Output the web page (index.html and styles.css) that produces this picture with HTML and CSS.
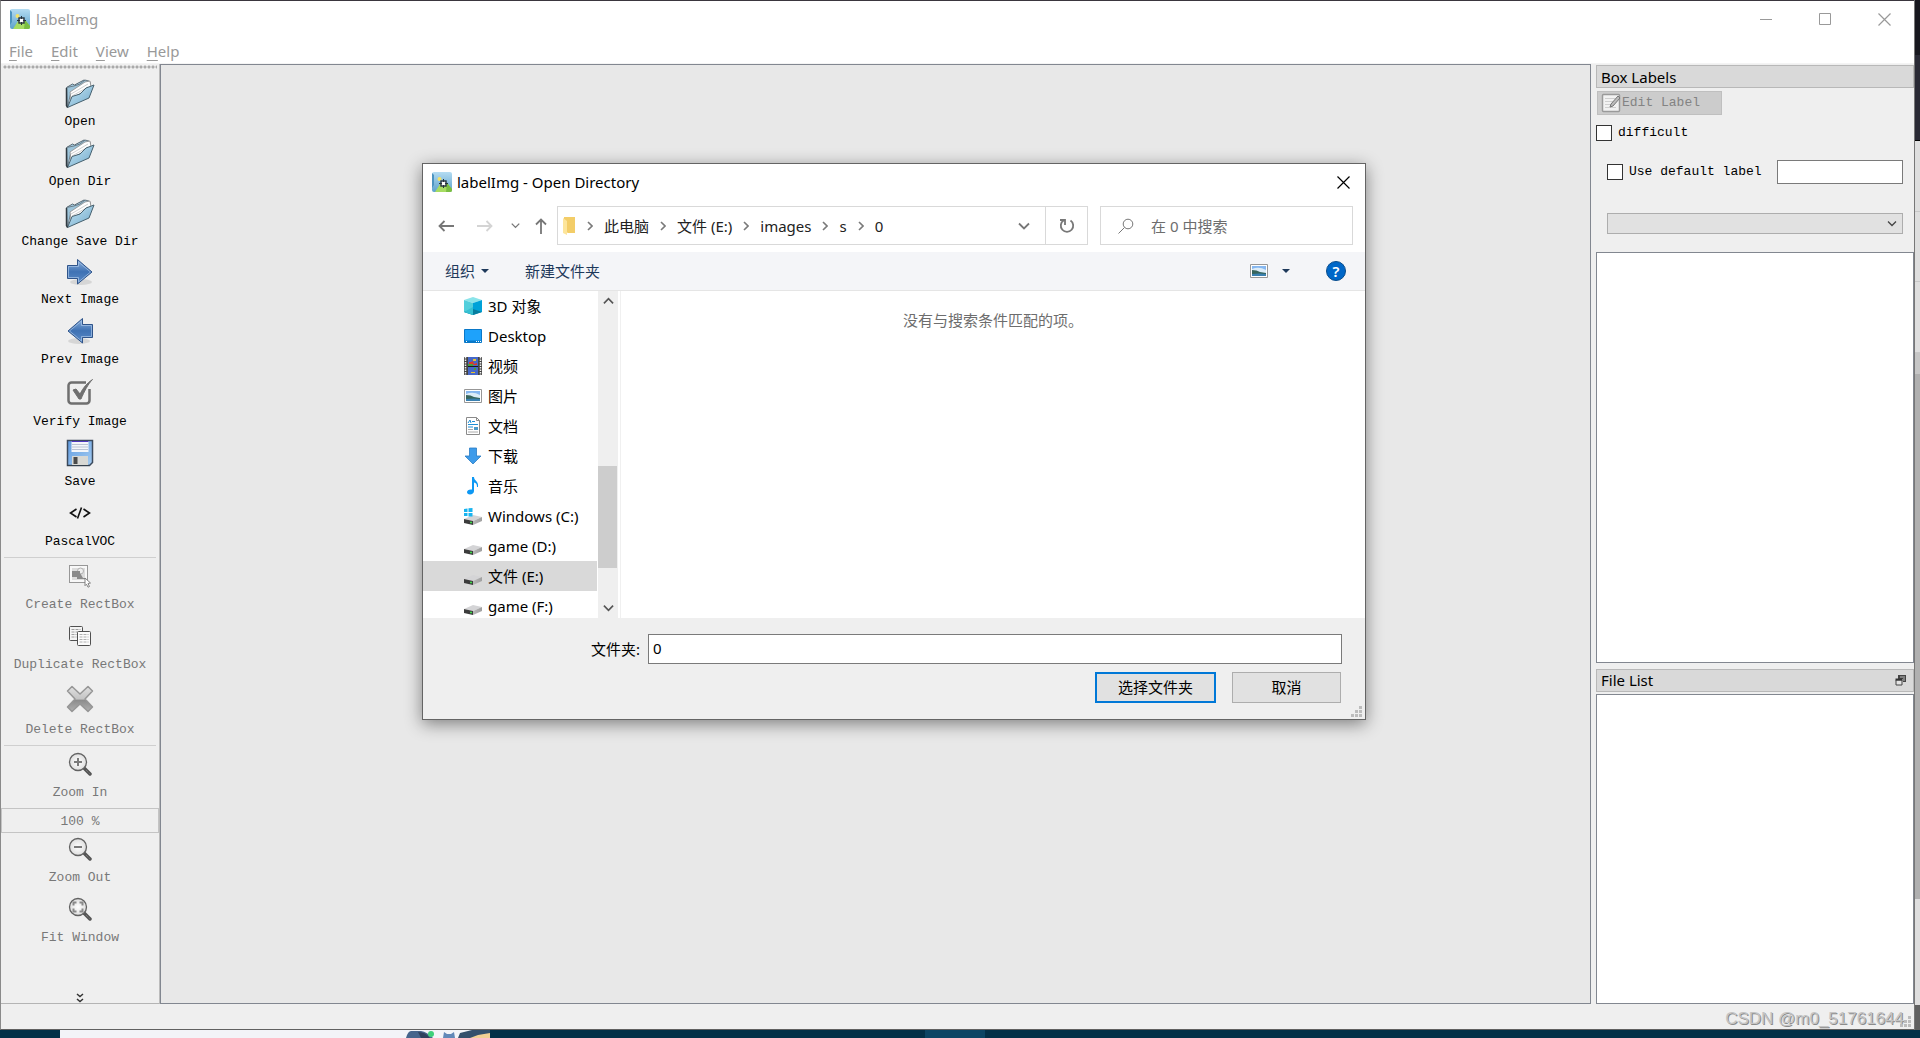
FILE: index.html
```html
<!DOCTYPE html>
<html lang="zh-CN">
<head>
<meta charset="utf-8">
<title>labelImg</title>
<link rel="stylesheet" href="styles.css">
</head>
<body>
<svg class="defs" aria-hidden="true">
  <defs>
    <linearGradient id="gSky" x1="0" y1="0" x2="0" y2="1"><stop offset="0" stop-color="#b4dcf2"/><stop offset="1" stop-color="#5ca2cc"/></linearGradient>
    <linearGradient id="gFolder" x1="0" y1="0" x2="1" y2="1"><stop offset="0" stop-color="#c8e6f4"/><stop offset="1" stop-color="#6fa9cb"/></linearGradient>
    <linearGradient id="gArrow" x1="0" y1="0" x2="0" y2="1"><stop offset="0" stop-color="#8fb2dc"/><stop offset="0.5" stop-color="#3f72b4"/><stop offset="1" stop-color="#5c8cc8"/></linearGradient>
    <linearGradient id="gFloppy" x1="0" y1="0" x2="1" y2="1"><stop offset="0" stop-color="#5f9be0"/><stop offset="1" stop-color="#a6cdf2"/></linearGradient>
    <linearGradient id="gCross" x1="0" y1="0" x2="0" y2="1"><stop offset="0" stop-color="#e0e0e0"/><stop offset="0.5" stop-color="#c4c4c4"/><stop offset="0.55" stop-color="#8c8c8c"/><stop offset="1" stop-color="#b0b0b0"/></linearGradient>
    <linearGradient id="gDisk" x1="0" y1="0" x2="1" y2="0"><stop offset="0" stop-color="#b8b8b8"/><stop offset="1" stop-color="#a0a0a0"/></linearGradient>
    <radialGradient id="gLens"><stop offset="0" stop-color="#ffffff"/><stop offset="1" stop-color="#dedede"/></radialGradient>

    <symbol id="app" viewBox="0 0 20 20">
      <rect width="20" height="20" rx="2" fill="url(#gSky)"/>
      <path d="M0 1l2 2v10l-2 3z" fill="#4d94c0"/>
      <path d="M3 20l7-11 3 4 2-2 5 6v1a2 2 0 0 1-2 2z" fill="#a6dc62"/>
      <path d="M14 20l1-9 5 6v1a2 2 0 0 1-2 2z" fill="#79bd42"/>
      <circle cx="7.500" cy="7" r="2" fill="#f3e268"/>
      <rect x="9" y="9" width="5" height="5" fill="#fff" stroke="#26323c" stroke-width="1.400"/>
      <path d="M11.500 7v3M11.500 13v3M7 11.500h3M13 11.500h3" stroke="#26323c"/>
    </symbol>
    <symbol id="folder" viewBox="0 0 30 30">
      <path d="M1.500 9.500l6-3.500 2 1L19 2l2 1 4 1v5" fill="#a8cfe4" stroke="#5a6a74"/>
      <path d="M1.500 9.500l1 19.500 3-13L11 14 25 6l-1-3-4-1-5 4-6 2z" fill="#9cc4da" stroke="#5a6a74" stroke-width="0.800"/>
      <path d="M5 14L20 4l5-1 1 6L6 21z" fill="#fff" stroke="#8a8a8a" stroke-width="0.800"/>
      <path d="M6 16l17-10M7 18l16-9" stroke="#d0d0d0"/>
      <path d="M2.500 29.500L7 18.500l8-2.500 6-6 8-3-5 13z" fill="url(#gFolder)" stroke="#46606e"/>
      <path d="M1.500 10v17.500l1 2" stroke="#303a40" stroke-width="1.500" fill="none"/>
    </symbol>
    <symbol id="next" viewBox="0 0 28 28">
      <ellipse cx="15" cy="24" rx="11" ry="3" fill="#000" opacity="0.100"/>
      <path d="M1.500 7.500h10V1.500L26 14 11.500 26v-5.500h-10z" fill="url(#gArrow)" stroke="#2f548a"/>
      <path d="M2.500 8.500h10V4L24.500 14 12.500 24v-4.500h-10z" fill="none" stroke="#a9c5e8" stroke-width="0.700"/>
    </symbol>
    <symbol id="verify" viewBox="0 0 28 28">
      <path d="M20 4.500H5.500a3 3 0 0 0-3 3v15a3 3 0 0 0 3 3h15a3 3 0 0 0 3-3V11" fill="none" stroke="#6f6f6f" stroke-width="2.500"/>
      <path d="M7 12l3-1 4 5c3-6 7-11 12.500-14.500C22 6 18 14 15 21h-2z" fill="#6f6f6f" stroke="#6f6f6f" stroke-linejoin="round"/>
    </symbol>
    <symbol id="save" viewBox="0 0 28 28">
      <path d="M1.500 1.500h25v22l-3 3h-22z" fill="url(#gFloppy)" stroke="#3c4a5c" stroke-width="1.500"/>
      <path d="M5.500 2h17v11h-17z" fill="#f4f6fa"/><path d="M5.500 2.500h17" stroke="#5038c0"/><path d="M6 5.500h16M6 8h16M6 10.500h16" stroke="#b9c4d4"/>
      <path d="M6 17h16v9H6z" fill="#d8d8d4"/><path d="M7.500 18h4v7h-4z" fill="#4a4a4a"/><path d="M1 26.500h22" stroke="#34404c"/>
    </symbol>
    <symbol id="code" viewBox="0 0 24 12">
      <path d="M8.500 2L2.500 6l6 4M15.500 2l6 4-6 4M13.500 0.500l-4 11" fill="none" stroke="#111" stroke-width="1.600"/>
    </symbol>
    <symbol id="create" viewBox="0 0 24 24">
      <rect x="1.500" y="1.500" width="18" height="17" fill="#f8f8f8" stroke="#3a3a3a" stroke-dasharray="1 1"/>
      <rect x="4" y="4" width="13" height="12" fill="#dcdcdc"/><circle cx="12.500" cy="7" r="3" fill="#eee" stroke="#b0b0b0"/>
      <path d="M4 7h8v2l3 5h2v1H9v-2H4z" fill="#8a8a8a"/>
      <path d="M17 14l5.500 5-2.500.500 1.500 3-1.500.700-1.500-3-1.500 1.500z" fill="#fff" stroke="#777" stroke-width="0.900"/>
    </symbol>
    <symbol id="duplicate" viewBox="0 0 24 24">
      <rect x="1.500" y="2.500" width="13" height="14" rx="1" fill="#f4f4f4" stroke="#505050"/>
      <path d="M3.500 5.500h9M3.500 8h6M3.500 10.500h5M3.500 13h5" stroke="#a0a0a0" stroke-dasharray="3 1"/>
      <rect x="9.500" y="7.500" width="13" height="14" rx="1" fill="#fcfcfc" stroke="#505050"/>
      <path d="M11.500 10.500h9M11.500 13h9M11.500 15.500h9M11.500 18h9" stroke="#b0b0b0" stroke-dasharray="3 1"/>
    </symbol>
    <symbol id="delete" viewBox="0 0 28 28">
      <path d="M6 1.500l8 7.500 8-7.500 4.500 4.500-7.500 8 7.500 8-4.500 4.500-8-7.500-8 7.500L1.500 22 9 14 1.500 6z" fill="url(#gCross)" stroke="#969696" stroke-width="1.500" stroke-linejoin="round"/>
    </symbol>
    <symbol id="lens" viewBox="0 0 24 24">
      <path d="M16 16l6 6" stroke="#555" stroke-width="3.500" stroke-linecap="round"/><path d="M18 18l3.500 3.500" stroke="#8a8a8a" stroke-dasharray="1 1"/>
      <circle cx="10" cy="10" r="8.500" fill="url(#gLens)" stroke="#626262" stroke-width="1.300"/>
    </symbol>
    <symbol id="edit" viewBox="0 0 20 20">
      <rect x="1.500" y="1.500" width="17" height="17" rx="1" fill="#f2f2f2" stroke="#9a9a9a" stroke-width="1.500"/>
      <path d="M4 5.500h10M4 8.500h8M4 11.500h6M4 14.500h11" stroke="#cfcfcf"/>
      <path d="M9 14l1-3 7-8 2 2-7 8z" fill="#bbb" stroke="#777"/>
    </symbol>
    <symbol id="cube" viewBox="0 0 18 18"><path d="M0 3l9-3 9 3-9 3z" fill="#8be4ea"/><path d="M0 3l9 3v12l-9-3z" fill="#52cfdc"/><path d="M18 3L9 6v12l9-3z" fill="#00a2d8"/><path d="M9 12l9 3-9 3-9-3z" fill="#087e9e"/><path d="M0 15l9-5v8z" fill="#36c0d2"/></symbol>
    <symbol id="desktop" viewBox="0 0 18 18"><path d="M.5 2.500h17v13H.5z" fill="#1ea2fb" stroke="#0a78c8"/><path d="M1 13.500h16v1.500H1z" fill="#0878c8"/><path d="M2 14.500h1M12 14.500h1M14 14.500h1M16 14.500h1" stroke="#fff"/></symbol>
    <symbol id="video" viewBox="0 0 18 18"><path d="M0 0h18v18H0z" fill="#444"/><path d="M1.500 0v18M16.500 0v18" stroke="#eee" stroke-width="1.500" stroke-dasharray="1.500 1"/><path d="M4 0h10v9H4zM4 10h10v8H4z" fill="#4668c8"/><path d="M5 5h2l2-1 1 3 3-1v2H5z" fill="#d83a2c"/><path d="M9 2h3v2H9zM7 15h4v1H7z" fill="#e8c22c"/><path d="M4 7h5v2H4zM10 11h2v2h-2z" fill="#46a03c"/><path d="M4 9.500h10" stroke="#1b1b1b"/></symbol>
    <symbol id="picture" viewBox="0 0 18 18"><path d="M.5 2.500h17v13H.5z" fill="#fff" stroke="#979797"/><path d="M2 4h14v10H2z" fill="#86b7f0"/><path d="M2 7q7-3 14 1v3H2z" fill="#dcecf8"/><path d="M2 8q5 0 8 2l6 1v3H2z" fill="#37655c"/><path d="M2 12q8-1 14 0v2H2z" fill="#3a80b0"/></symbol>
    <symbol id="document" viewBox="0 0 18 18"><path d="M2.500.5h10l3 3v14h-13z" fill="#fff" stroke="#8a8a8a"/><path d="M12.500.5v3h3" fill="none" stroke="#8a8a8a"/><path d="M4 6l2-3 1 3M8 4.500h3M4 7.500h10M4 10h5" stroke="#1f8fd6" fill="none"/><path d="M10 10h4v3h-4z" fill="#4c9ac8"/><path d="M4 12.500h5M4 15h10" stroke="#aaa"/></symbol>
    <symbol id="download" viewBox="0 0 18 18"><path d="M5.500 1h7v8h4.500l-8 8-8-8h4.500z" fill="#3d9bea" stroke="#2a7cc4" stroke-width="0.800"/></symbol>
    <symbol id="music" viewBox="0 0 18 18"><path d="M8 0h2c0 4 5 4 4 10h-1c0-3-1-4-3-4.500V14c0 2-2 3.500-4 3.500S3 16.500 3 15s2-3 5-2.500z" fill="#0d98f4"/></symbol>
    <symbol id="drive" viewBox="0 0 18 18"><path d="M0 12l9-4 9 2-9 4z" fill="#d4d4d6"/><path d="M0 12l9 2v4l-9-2z" fill="#3c3c3c"/><path d="M9 14l9-4v4l-9 4z" fill="url(#gDisk)"/><path d="M6 15.500h2" stroke="#3fdc4a" stroke-width="1.500"/></symbol>
    <symbol id="windrive" viewBox="0 0 18 18"><use href="#drive"/><path d="M0 2l3.500-.5V5H0zM4.500 1.300L8.500 1v4h-4zM0 6h3.500v3H0zM4.500 6h4v3.500h-4z" fill="#18b4f0"/></symbol>
    <symbol id="sep" viewBox="0 0 6 10"><path d="M1 1l4 4-4 4" fill="none" stroke="#7a7a7a" stroke-width="1.600"/></symbol>
    <symbol id="down" viewBox="0 0 12 8"><path d="M1 1.500l5 5 5-5" fill="none" stroke="currentColor" stroke-width="1.800"/></symbol>
    <symbol id="back" viewBox="0 0 16 12"><path d="M6.500 1l-5 5 5 5M1.500 6H16" fill="none" stroke="currentColor" stroke-width="1.800"/></symbol>
    <symbol id="close" viewBox="0 0 13 13"><path d="M.5.5l12 12M12.500.5l-12 12" stroke="currentColor" stroke-width="1.200"/></symbol>
    <symbol id="grip" viewBox="0 0 11 11"><path d="M8 0h3v3H8zM4 4h3v3H4zM8 4h3v3H8zM0 8h3v3H0zM4 8h3v3H4zM8 8h3v3H8z" fill="#bcbcbc"/></symbol>
  </defs>
</svg>

<div class="desktop">
  <div class="screen">
    <main class="window">
      <header class="titlebar">
        <svg class="i20"><use href="#app"/></svg>
        <span class="titlebar-text">labelImg</span>
        <div class="win-buttons">
          <button aria-label="Minimize"><svg width="13" height="13"><path d="M0 6.500h12" stroke="#999"/></svg></button>
          <button aria-label="Maximize"><svg width="13" height="13"><path d="M.5.5h11v11H.5z" fill="none" stroke="#999"/></svg></button>
          <button aria-label="Close"><svg width="13" height="13"><use href="#close"/></svg></button>
        </div>
      </header>
      <nav class="menubar">
        <a href="#file"><u>F</u>ile</a><a href="#edit"><u>E</u>dit</a><a href="#view"><u>V</u>iew</a><a href="#help"><u>H</u>elp</a>
      </nav>

      <div class="workspace">
        <aside class="toolbar">
          <div class="handle"></div>
          <div class="group group-first">
            <button class="tool"><svg class="i30"><use href="#folder"/></svg><span>Open</span></button>
            <button class="tool"><svg class="i30"><use href="#folder"/></svg><span>Open Dir</span></button>
            <button class="tool"><svg class="i30"><use href="#folder"/></svg><span>Change Save Dir</span></button>
            <button class="tool tool-short"><svg class="i28"><use href="#next"/></svg><span>Next Image</span></button>
            <button class="tool"><svg class="i28 flip"><use href="#next"/></svg><span>Prev Image</span></button>
            <button class="tool tool-tall"><svg class="i28"><use href="#verify"/></svg><span>Verify Image</span></button>
            <button class="tool"><svg class="i28"><use href="#save"/></svg><span>Save</span></button>
            <button class="tool"><svg class="icode"><use href="#code"/></svg><span>PascalVOC</span></button>
          </div>
          <div class="group group-ruled">
            <button class="tool" disabled><svg class="i24"><use href="#create"/></svg><span>Create RectBox</span></button>
            <button class="tool" disabled><svg class="i24"><use href="#duplicate"/></svg><span>Duplicate RectBox</span></button>
            <button class="tool tool-big" disabled><svg class="i28"><use href="#delete"/></svg><span>Delete RectBox</span></button>
          </div>
          <div class="group group-ruled">
            <button class="tool" disabled><svg class="i24"><use href="#lens"/><path d="M6 10h8M10 6v8" stroke="#7a7a7a" stroke-width="2"/></svg><span>Zoom In</span></button>
          </div>
          <input class="zoom" value="100 %" aria-label="Zoom level" disabled>
          <div class="group">
            <button class="tool" disabled><svg class="i24"><use href="#lens"/><path d="M6 10h8" stroke="#7a7a7a" stroke-width="2"/></svg><span>Zoom Out</span></button>
            <button class="tool" disabled><svg class="i24"><use href="#lens"/><path d="M5.500 8.500v-3h3M11.500 5.500h3v3M14.500 11.500v3h-3M8.500 14.500h-3v-3" stroke="#8a8a8a" stroke-width="2" fill="none"/></svg><span>Fit Window</span></button>
          </div>
          <button class="more" aria-label="More tools"><svg width="8" height="10"><path d="M1 1l3 2.500L7 1M1 6l3 2.500L7 6" fill="none" stroke="#333" stroke-width="1.500"/></svg></button>
        </aside>

        <section class="canvas"></section>

        <aside class="docks">
          <h2 class="dock-title">Box Labels</h2>
          <button class="edit-label" disabled><svg class="i20"><use href="#edit"/></svg>Edit Label</button>
          <label class="check"><input type="checkbox">difficult</label>
          <div class="default-row">
            <label class="check"><input type="checkbox">Use default label</label>
            <input class="default-input" type="text" aria-label="Default label">
          </div>
          <div class="combo">
            <select aria-label="Label filter"></select>
            <svg width="12" height="8"><path d="M2 1.500l4 4 4-4" fill="none" stroke="#444" stroke-width="1.300"/></svg>
          </div>
          <div class="list list-labels"></div>
          <h2 class="dock-title dock-files">File List
            <button aria-label="Float"><svg width="11" height="11"><path d="M3 0h8v7H8V4H3z" fill="#444"/><path d="M5 2h5M9 3v3" stroke="#bbb"/><path d="M1 5h6v5H1z" fill="#e4e4e4" stroke="#444"/><path d="M.5 4.500h7" stroke="#333" stroke-width="2"/></svg></button>
          </h2>
          <div class="list list-files"></div>
        </aside>
      </div>
      <footer class="statusbar"><span class="watermark">CSDN @m0_51761644</span><svg width="11" height="11"><use href="#grip"/></svg></footer>
    </main>

    <div class="behind">
      <i class="b-dark"></i><i class="b-slate"></i><i class="b-light"></i><i class="b-light"></i><i class="b-light"></i><i class="b-bar"></i><i class="b-grey"></i><i class="b-page"></i><i class="b-end"></i>
    </div>
  </div>
  <div class="taskbar">
    <div class="task-search">
      <svg width="86" height="8" viewBox="0 0 86 8"><path d="M2 8q2-7 5-7h10q6 1 12 7z" fill="#46658c"/><path d="M14 2q8 0 12 6h-9z" fill="#2f405c"/><circle cx="27" cy="4" r="3" fill="#3ed07a"/><path d="M39 8l1-6 3 2h4l3-2 1 6z" fill="#6288b8"/><path d="M54 8l2-5 12-3h18v8z" fill="#34506c"/><path d="M66 8l8-3 12-2v5z" fill="#f2cf94"/></svg>
    </div>
    <div class="task-active"></div>
  </div>

  <div class="dialog" role="dialog" aria-label="Open Directory">
    <header class="dlg-title"><svg class="i20"><use href="#app"/></svg><span>labelImg - Open Directory</span>
      <button aria-label="Close"><svg width="13" height="13"><use href="#close"/></svg></button></header>
    <div class="dlg-nav">
      <div class="arrows">
        <button aria-label="Back"><svg width="16" height="12"><use href="#back"/></svg></button>
        <button class="dim" aria-label="Forward"><svg class="flip" width="16" height="12"><use href="#back"/></svg></button>
        <button aria-label="Recent"><svg width="9" height="7"><use href="#down"/></svg></button>
        <button aria-label="Up"><svg width="12" height="16"><path d="M1 6.500l5-5 5 5M6 1.500V16" fill="none" stroke="currentColor" stroke-width="1.800"/></svg></button>
      </div>
      <div class="address">
        <svg class="addr-icon" width="13" height="18"><path d="M1 0h11v16H5L1 14z" fill="#f3cd68"/><path d="M0 1l4 3v14l-4-2z" fill="#fde59b"/></svg>
        <svg class="sep"><use href="#sep"/></svg><a href="#pc">此电脑</a>
        <svg class="sep"><use href="#sep"/></svg><a href="#e">文件 (E:)</a>
        <svg class="sep"><use href="#sep"/></svg><a href="#images">images</a>
        <svg class="sep"><use href="#sep"/></svg><a href="#s">s</a>
        <svg class="sep"><use href="#sep"/></svg><a href="#0">0</a>
        <button class="addr-drop" aria-label="History"><svg width="12" height="8"><use href="#down"/></svg></button>
        <button class="refresh" aria-label="Refresh"><svg width="16" height="16"><path d="M11.500 2.500a6.200 6.200 0 1 1-7 0M1 2h5v5" fill="none" stroke="currentColor" stroke-width="1.800"/></svg></button>
      </div>
      <label class="search"><svg width="16" height="16"><circle cx="10" cy="6" r="4.800" fill="none" stroke="#777"/><path d="M6.500 9.500L.5 15.500" stroke="#777"/></svg><input type="text" placeholder="在 0 中搜索" aria-label="搜索"></label>
    </div>
    <div class="dlg-bar">
      <button>组织<i class="caret"></i></button>
      <button>新建文件夹</button>
      <button class="view-mode" aria-label="视图"><svg class="i18"><use href="#picture"/></svg><i class="caret"></i></button>
      <button class="help" aria-label="帮助">?</button>
    </div>
    <div class="dlg-body">
      <ul class="tree">
        <li><svg class="i18"><use href="#cube"/></svg>3D 对象</li>
        <li><svg class="i18"><use href="#desktop"/></svg>Desktop</li>
        <li><svg class="i18"><use href="#video"/></svg>视频</li>
        <li><svg class="i18"><use href="#picture"/></svg>图片</li>
        <li><svg class="i18"><use href="#document"/></svg>文档</li>
        <li><svg class="i18"><use href="#download"/></svg>下载</li>
        <li><svg class="i18"><use href="#music"/></svg>音乐</li>
        <li><svg class="i18"><use href="#windrive"/></svg>Windows (C:)</li>
        <li><svg class="i18"><use href="#drive"/></svg>game (D:)</li>
        <li class="selected"><svg class="i18"><use href="#drive"/></svg>文件 (E:)</li>
        <li><svg class="i18"><use href="#drive"/></svg>game (F:)</li>
      </ul>
      <div class="scroll"><svg class="turn" width="11" height="8"><use href="#down"/></svg><div class="track"><div class="thumb"></div></div><svg width="11" height="8"><use href="#down"/></svg></div>
      <div class="files">没有与搜索条件匹配的项。</div>
    </div>
    <form class="dlg-foot">
      <label for="folder-name">文件夹:</label><input id="folder-name" type="text" value="0">
      <div class="actions"><button class="primary" type="button">选择文件夹</button><button type="button">取消</button></div>
      <svg class="grip" width="11" height="11"><use href="#grip"/></svg>
    </form>
  </div>
</div>
</body>
</html>
```
FILE: styles.css
```css
* { box-sizing: border-box; }
body { margin: 0; font: 15px/20px "Noto Sans", "Noto Sans CJK SC", sans-serif; color: #000; }
button, input, select { font: inherit; color: inherit; margin: 0; border-radius: 0; }
button { padding: 0; border: 0; background: none; }
a { color: inherit; text-decoration: none; }
svg { display: block; flex: none; }
.defs { position: absolute; width: 0; height: 0; }
.i18 { width: 18px; height: 18px; }
.i20 { width: 20px; height: 20px; }
.i24 { width: 24px; height: 24px; }
.i28 { width: 28px; height: 28px; }
.i30 { width: 30px; height: 30px; }
.icode { width: 24px; height: 12px; }
.flip { transform: scaleX(-1); }
.turn { transform: scaleY(-1); }

.desktop { position: relative; height: 100vh; display: flex; flex-direction: column; overflow: hidden; background: #033047; }
.screen { flex: 1; display: flex; min-height: 0; }
.window { flex: 1; display: flex; flex-direction: column; min-width: 0; background: #efefef; border: 1px solid #3a363e; border-right: 0; border-left-color: #8a8a8a; border-bottom-color: #606060; }

/* Title and menus */
.titlebar { display: flex; align-items: center; height: 36px; padding-left: 9px; gap: 6px; background: #fff; color: #999; }
.win-buttons { display: flex; margin-left: auto; }
.win-buttons button { width: 59px; display: flex; justify-content: center; }
.menubar { display: flex; gap: 18px; height: 27px; padding: 4px 8px; background: #fff; color: #999; border-bottom: 1px solid #f4f4f4; }
.menubar u { text-underline-offset: 3px; }
.workspace { flex: 1; display: flex; min-height: 0; }

/* Toolbar */
.toolbar { width: 159px; flex: none; display: flex; flex-direction: column; border-right: 1px solid #bcbcbc; border-bottom: 1px solid #b4b4b4; font: 13px/16px "Liberation Mono", monospace; }
.handle { height: 4px; margin: 1px 2px 8px; background: radial-gradient(circle at 2px 2px, #aaa 1px, #efefef 2px) 0 0 / 4px 4px; }
.group { display: flex; flex-direction: column; gap: 7px; }
.group-first { padding-bottom: 7px; }
.group-ruled { padding: 2px 0 7px; border-top: 1px solid #cfcfcf; margin: 0 3px; }
.tool { display: grid; grid-template-rows: 32px 16px; row-gap: 5px; justify-items: center; align-items: center; white-space: nowrap; }
.tool-short { grid-template-rows: 30px 16px; }
.tool-tall { grid-template-rows: 34px 16px; }
.tool-big { grid-template-rows: 37px 16px; }
.tool:disabled { color: #787878; }
.zoom { height: 25px; width: 100%; border: 1px solid #c4c4c4; background: #efefef; color: #787878; text-align: center; padding: 2px 0 0; }
.more { margin-top: auto; height: 10px; display: flex; justify-content: center; }

.canvas { flex: 1; min-width: 0; background: #e8e8e8; border: 1px solid #828790; }

/* Docks */
.docks { width: 323px; flex: none; display: flex; flex-direction: column; padding: 1px 0 0 5px; }
.dock-title { flex: none; display: flex; align-items: center; height: 23px; margin: 0; padding: 0 7px 0 4px; font-size: 15px; font-weight: 400; background: #d9d9d9; border: 1px solid #b8b8b8; }
.dock-title button { margin-left: auto; }
.edit-label { display: flex; align-items: center; gap: 1px; align-self: flex-start; width: 125px; height: 24px; margin: 3px 0 0 1px; padding-left: 3px; border: 1px solid #bfbfbf; background: #ccc; color: #838383; font: 13px/16px "Liberation Mono", monospace; }
.check { display: flex; align-items: center; gap: 6px; height: 16px; font: 13px/16px "Liberation Mono", monospace; }
.check input { appearance: none; width: 16px; height: 16px; border: 1px solid #333; background: #fff; }
.docks > .check { margin-top: 10px; }
.default-row { display: flex; align-items: center; justify-content: space-between; margin: 19px 11px 0; }
.default-input { width: 126px; height: 24px; border: 1px solid #7a7a7a; background: #fff; }
.combo { display: grid; align-items: center; margin: 29px 11px 0; }
.combo select { grid-area: 1 / 1; appearance: none; height: 21px; border: 1px solid #adadad; background: #e1e1e1; }
.combo svg { grid-area: 1 / 1; justify-self: end; margin-right: 5px; }
.list { background: #fff; border: 1px solid #828790; min-height: 0; }
.list-labels { flex: 411; margin-top: 18px; }
.dock-files { margin: 6px 0 2px; }
.list-files { flex: 310; }
.statusbar { height: 25px; flex: none; display: flex; justify-content: flex-end; align-items: flex-end; padding: 0 3px 2px 0; }
.watermark { font: 17px/17px "Liberation Sans", sans-serif; color: #c4c4c4; text-shadow: 1px 1px 0 #8c8c8c; margin-right: -4px; white-space: nowrap; }

/* Windows showing past the right edge */
.behind { width: 6px; flex: none; display: flex; flex-direction: column; border-left: 1px solid #777; }
.behind i { background: #dedede; }
.b-dark { flex: 55; }
.behind .b-dark { background: #18181f; }
.behind .b-slate { flex: 86; background: #2a2a35; border-bottom: 1px solid #000; }
.behind .b-light { flex: 70; border-bottom: 1px solid #c8c8c8; }
.behind .b-bar { flex: 21; background: #c6c6c6; }
.behind .b-grey { flex: 528; background: #b0b0b0; }
.b-page { flex: 107; }
.behind .b-end { flex: 25; background: #606060; }

.taskbar { display: flex; height: 8px; flex: none; padding-left: 60px; }
.task-search { width: 430px; background: #f3f4f8; display: flex; justify-content: flex-end; }
.task-active { width: 60px; margin-left: 435px; background: #0c4564; }

/* Directory dialog */
.dialog { position: absolute; left: 422px; top: 163px; width: 944px; display: flex; flex-direction: column; background: #fff; border: 1px solid #646464; box-shadow: 0 4px 16px rgba(0, 0, 0, 0.45); }
.dlg-title { display: flex; align-items: center; gap: 5px; height: 36px; padding: 0 15px 0 9px; }
.dlg-title button { margin-left: auto; }
.dlg-nav { display: flex; height: 45px; padding: 6px 12px 0 15px; color: #777; }
.arrows { display: flex; align-items: center; width: 119px; height: 39px; }
.arrows button { margin-right: 23px; }
.arrows button:nth-child(n+2) { margin-right: 18px; }
.arrows button:nth-child(n+3) { margin-right: 15px; }
.arrows .dim { color: #d4d4d4; }
.address { flex: 1; display: flex; align-items: center; gap: 11px; height: 39px; padding-left: 5px; border: 1px solid #d9d9d9; color: #222; white-space: nowrap; }
.sep { width: 6px; height: 10px; }
.address button { color: #777; display: flex; align-items: center; justify-content: center; height: 100%; }
.addr-drop { width: 20px; margin-left: auto; }
.refresh { width: 42px; }
.address .refresh { border-left: 1px solid #d9d9d9; }
.search { display: flex; align-items: center; gap: 17px; width: 253px; height: 39px; margin-left: 12px; padding-left: 17px; border: 1px solid #d9d9d9; }
.search input { width: 180px; border: 0; padding: 0; background: none; }
.search input::placeholder { color: #6d6d6d; }
.dlg-bar { display: flex; align-items: center; gap: 36px; height: 39px; margin-top: 7px; padding: 0 19px 0 22px; background: #f4f5f8; border-bottom: 1px solid #e5e5e5; color: #1e395b; }
.dlg-bar button { display: flex; align-items: center; }
.caret { border: 4px solid transparent; border-top-color: #1e395b; border-bottom: 0; margin-left: 6px; }
.view-mode { margin-left: auto; }
.view-mode .caret { margin-left: 14px; }
.dlg-bar .help { width: 20px; height: 20px; justify-content: center; border-radius: 50%; background: #0067c8; border: 1px solid #084c8c; color: #fff; font-weight: 600; }
.dlg-body { display: flex; height: 327px; }
.tree { width: 174px; margin: 0; padding: 0; list-style: none; overflow: hidden; white-space: nowrap; }
.tree li { display: flex; align-items: center; gap: 6px; height: 30px; padding-left: 41px; }
.tree .selected { background: #d9d9d9; }
.scroll { width: 20px; padding: 6px 0; margin-left: 1px; display: flex; flex-direction: column; align-items: center; background: #efefef; color: #555; }
.track { flex: 1; width: 100%; display: grid; grid-template-rows: 161fr 102fr 36fr; }
.thumb { grid-row: 2; background: #cdcdcd; margin-right: 1px; }
.files { flex: 1; border-left: 1px solid #f0f0f0; margin-left: 2px; padding-top: 19px; text-align: center; color: #6d6d6d; }
.dlg-foot { display: grid; grid-template-columns: 217px 1fr; align-content: start; align-items: center; gap: 8px; height: 101px; padding: 16px 23px 0 0; background: #efefef; }
.dlg-foot label { text-align: right; }
.dlg-foot input { height: 30px; padding: 0 4px 2px; border: 1px solid #7a7a7a; background: #fff; }
.actions { grid-column: 2; display: flex; justify-content: flex-end; gap: 16px; padding-right: 1px; }
.actions button { width: 109px; height: 31px; padding-bottom: 2px; border: 1px solid #adadad; background: #e1e1e1; }
.actions .primary { width: 121px; border: 2px solid #0078d7; }
.grip { position: absolute; right: 3px; bottom: 2px; }
```
